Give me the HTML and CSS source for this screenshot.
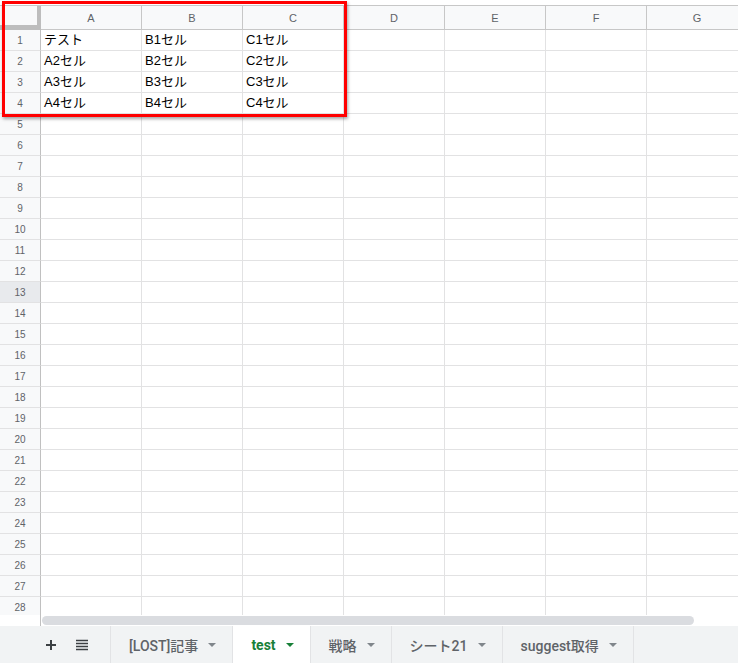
FILE: index.html
```html
<!DOCTYPE html>
<html>
<head>
<meta charset="utf-8">
<link rel="stylesheet" href="styles.css">
</head>
<body>
<div class="app">
  <div class="sheet">
    <div class="grid">
      <div class="corner"></div>
      <div class="ch">A</div><div class="ch">B</div><div class="ch">C</div><div class="ch">D</div><div class="ch">E</div><div class="ch">F</div><div class="ch">G</div>

      <div class="rh">1</div><div class="c">テスト</div><div class="c">B1セル</div><div class="c">C1セル</div><div class="c"></div><div class="c"></div><div class="c"></div><div class="c"></div>
      <div class="rh">2</div><div class="c">A2セル</div><div class="c">B2セル</div><div class="c">C2セル</div><div class="c"></div><div class="c"></div><div class="c"></div><div class="c"></div>
      <div class="rh">3</div><div class="c">A3セル</div><div class="c">B3セル</div><div class="c">C3セル</div><div class="c"></div><div class="c"></div><div class="c"></div><div class="c"></div>
      <div class="rh">4</div><div class="c">A4セル</div><div class="c">B4セル</div><div class="c">C4セル</div><div class="c"></div><div class="c"></div><div class="c"></div><div class="c"></div>
      <div class="rh">5</div><div class="c"></div><div class="c"></div><div class="c"></div><div class="c"></div><div class="c"></div><div class="c"></div><div class="c"></div>
      <div class="rh">6</div><div class="c"></div><div class="c"></div><div class="c"></div><div class="c"></div><div class="c"></div><div class="c"></div><div class="c"></div>
      <div class="rh">7</div><div class="c"></div><div class="c"></div><div class="c"></div><div class="c"></div><div class="c"></div><div class="c"></div><div class="c"></div>
      <div class="rh">8</div><div class="c"></div><div class="c"></div><div class="c"></div><div class="c"></div><div class="c"></div><div class="c"></div><div class="c"></div>
      <div class="rh">9</div><div class="c"></div><div class="c"></div><div class="c"></div><div class="c"></div><div class="c"></div><div class="c"></div><div class="c"></div>
      <div class="rh">10</div><div class="c"></div><div class="c"></div><div class="c"></div><div class="c"></div><div class="c"></div><div class="c"></div><div class="c"></div>
      <div class="rh">11</div><div class="c"></div><div class="c"></div><div class="c"></div><div class="c"></div><div class="c"></div><div class="c"></div><div class="c"></div>
      <div class="rh">12</div><div class="c"></div><div class="c"></div><div class="c"></div><div class="c"></div><div class="c"></div><div class="c"></div><div class="c"></div>
      <div class="rh active">13</div><div class="c"></div><div class="c"></div><div class="c"></div><div class="c"></div><div class="c"></div><div class="c"></div><div class="c"></div>
      <div class="rh">14</div><div class="c"></div><div class="c"></div><div class="c"></div><div class="c"></div><div class="c"></div><div class="c"></div><div class="c"></div>
      <div class="rh">15</div><div class="c"></div><div class="c"></div><div class="c"></div><div class="c"></div><div class="c"></div><div class="c"></div><div class="c"></div>
      <div class="rh">16</div><div class="c"></div><div class="c"></div><div class="c"></div><div class="c"></div><div class="c"></div><div class="c"></div><div class="c"></div>
      <div class="rh">17</div><div class="c"></div><div class="c"></div><div class="c"></div><div class="c"></div><div class="c"></div><div class="c"></div><div class="c"></div>
      <div class="rh">18</div><div class="c"></div><div class="c"></div><div class="c"></div><div class="c"></div><div class="c"></div><div class="c"></div><div class="c"></div>
      <div class="rh">19</div><div class="c"></div><div class="c"></div><div class="c"></div><div class="c"></div><div class="c"></div><div class="c"></div><div class="c"></div>
      <div class="rh">20</div><div class="c"></div><div class="c"></div><div class="c"></div><div class="c"></div><div class="c"></div><div class="c"></div><div class="c"></div>
      <div class="rh">21</div><div class="c"></div><div class="c"></div><div class="c"></div><div class="c"></div><div class="c"></div><div class="c"></div><div class="c"></div>
      <div class="rh">22</div><div class="c"></div><div class="c"></div><div class="c"></div><div class="c"></div><div class="c"></div><div class="c"></div><div class="c"></div>
      <div class="rh">23</div><div class="c"></div><div class="c"></div><div class="c"></div><div class="c"></div><div class="c"></div><div class="c"></div><div class="c"></div>
      <div class="rh">24</div><div class="c"></div><div class="c"></div><div class="c"></div><div class="c"></div><div class="c"></div><div class="c"></div><div class="c"></div>
      <div class="rh">25</div><div class="c"></div><div class="c"></div><div class="c"></div><div class="c"></div><div class="c"></div><div class="c"></div><div class="c"></div>
      <div class="rh">26</div><div class="c"></div><div class="c"></div><div class="c"></div><div class="c"></div><div class="c"></div><div class="c"></div><div class="c"></div>
      <div class="rh">27</div><div class="c"></div><div class="c"></div><div class="c"></div><div class="c"></div><div class="c"></div><div class="c"></div><div class="c"></div>
      <div class="rh">28</div><div class="c"></div><div class="c"></div><div class="c"></div><div class="c"></div><div class="c"></div><div class="c"></div><div class="c"></div>
    </div>
    <div class="highlight"></div>
  </div>
  <div class="hscroll">
    <div class="hs-left"></div>
    <div class="hs-track"><div class="thumb"></div></div>
  </div>
  <div class="tabbar">
    <div class="tools">
      <svg class="ico" width="12" height="12" viewBox="0 0 12 12"><path d="M6 1v10M1 6h10" stroke="#3c4043" stroke-width="2" fill="none"/></svg>
      <svg class="ico" width="12" height="12" viewBox="0 0 12 12"><path d="M0 1.5h12M0 4.5h12M0 7.5h12M0 10.5h12" stroke="#3c4043" stroke-width="1.6" fill="none"/></svg>
    </div>
    <div class="tab"><span>[LOST]記事</span><span class="arrow"></span></div>
    <div class="tab current"><span>test</span><span class="arrow"></span></div>
    <div class="tab"><span>戦略</span><span class="arrow"></span></div>
    <div class="tab"><span>シート21</span><span class="arrow"></span></div>
    <div class="tab"><span>suggest取得</span><span class="arrow"></span></div>
    <div class="tab-rest"></div>
  </div>
</div>
</body>
</html>
```

FILE: styles.css
```css
* { box-sizing: border-box; }
html, body { margin: 0; padding: 0; background: #fff; }
body { font-family: "Liberation Sans", Arial, "Noto Sans CJK JP", sans-serif; }

.app {
  width: 738px;
  height: 663px;
  display: flex;
  flex-direction: column;
  overflow: hidden;
}

.sheet {
  position: relative;
  height: 615px;
  padding-top: 5px;
  overflow: hidden;
  flex: none;
}

.grid {
  display: grid;
  grid-template-columns: 41px repeat(7, 101px);
  grid-template-rows: 24px;
  grid-auto-rows: 21px;
  width: 748px;
  border-top: 1px solid #c7c7c7;
}

.corner {
  background: #f8f9fa;
  border-right: 4px solid #bdbdbd;
  border-bottom: 5px solid #bdbdbd;
}

.ch {
  background: #f8f9fa;
  border-right: 1px solid #c7c7c7;
  border-bottom: 1px solid #c7c7c7;
  font-size: 11px;
  color: #5f6368;
  display: flex;
  align-items: center;
  justify-content: center;
}

.rh {
  background: #f8f9fa;
  border-right: 1px solid #c0c0c0;
  border-bottom: 1px solid #e2e2e3;
  font-size: 10px;
  color: #5f6368;
  display: flex;
  align-items: center;
  justify-content: center;
}
.rh.active { background: #e8eaed; }

.c {
  border-right: 1px solid #e2e2e3;
  border-bottom: 1px solid #e2e2e3;
  font-size: 13px;
  color: #000;
  padding-left: 3px;
  line-height: 20px;
  white-space: nowrap;
  overflow: hidden;
}

.highlight {
  position: absolute;
  left: 2px;
  top: 1px;
  width: 345px;
  height: 116px;
  border: 3px solid #ff0000;
  box-shadow: 1px 2px 3px rgba(0, 0, 0, 0.35);
  pointer-events: none;
}

.hscroll {
  height: 11px;
  display: flex;
  flex: none;
  background: #fff;
}
.hs-left {
  width: 41px;
  border-right: 1px solid #c0c0c0;
}
.hs-track {
  flex: 1;
  padding: 1px 0 0 1px;
}
.thumb {
  width: 652px;
  height: 9px;
  border-radius: 5px;
  background: #dadce0;
}

.tabbar {
  flex: 1;
  background: #f1f3f4;
  display: flex;
  align-items: stretch;
  font-family: Roboto, "Noto Sans CJK JP", sans-serif;
  font-size: 14px;
  font-weight: 500;
  color: #5f6368;
}

.tools {
  width: 111px;
  display: flex;
  align-items: center;
  padding-left: 45px;
  gap: 19px;
  border-right: 1px solid #e2e3e5;
}

.tab {
  display: flex;
  align-items: center;
  gap: 10px;
  padding: 0 16px 0 18px;
  border-right: 1px solid #e2e3e5;
}
.tab.current {
  background: #fff;
  color: #188038;
  font-weight: 700;
}
.arrow {
  width: 0;
  height: 0;
  border-left: 4px solid transparent;
  border-right: 4px solid transparent;
  border-top: 4px solid #80868b;
}
.tab.current .arrow { border-top-color: #188038; }
.tab-rest { flex: 1; }
```
